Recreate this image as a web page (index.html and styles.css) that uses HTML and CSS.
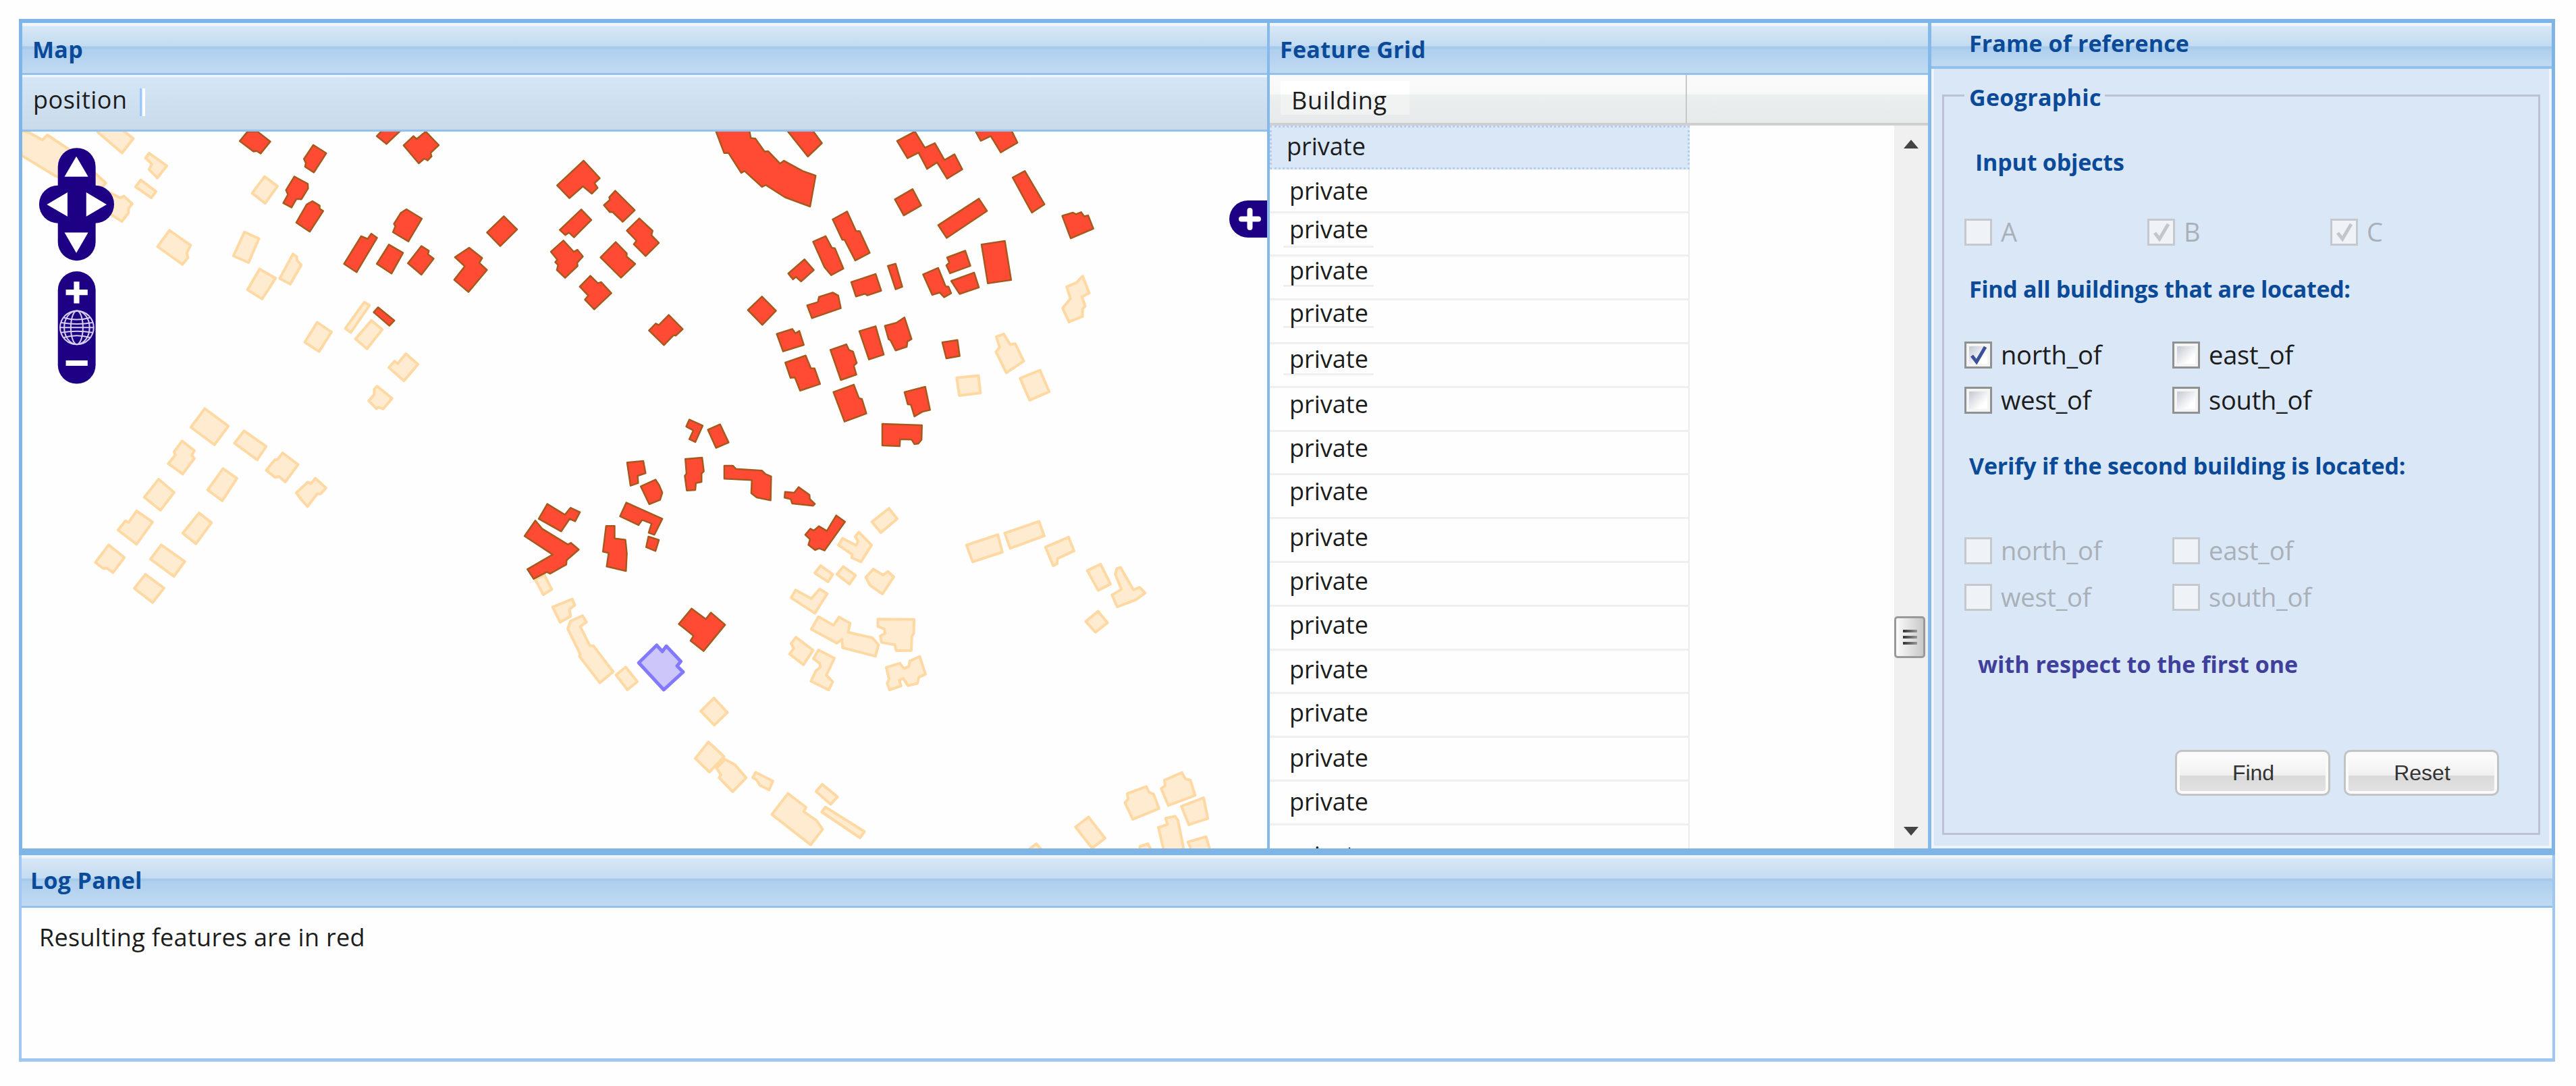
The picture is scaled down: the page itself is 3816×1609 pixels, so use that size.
FILE: index.html
```html
<!DOCTYPE html>
<html>
  <head>
    <meta charset="utf-8">
    <title>Map</title>
    <link rel="stylesheet" href="styles.css">
  </head>
  <body>
    <div class="viewport">
      <div class="top">
        <div class="panel map-panel">
          <h2 class="title">Map</h2>
          <div class="toolbar">
            <span>position</span>
            <i class="separator"></i>
          </div>
          <svg class="map" viewBox="33 195 1844 1062">
            <!-- every tile keeps its own coordinates -->
            <g class="private" transform="scale(.4082)">
              <polygon points="60,470 105,481 154,508 172,490 250,542 384,664 374,676 330,690 200,638 80,565"/>
              <polygon points="355,480 380,460 430,460 484,503 443,555"/>
              <polygon points="541,556 605,602 571,646 541,615 551,595 528,574"/>
              <polygon points="511,653 566,695 549,718 492,678"/>
              <polygon points="400,700 436,718 450,712 480,740 467,756 466,773 442,804 390,770"/>
              <polygon points="960,641 1007,676 962,738 915,701"/>
              <polygon points="615,836 692,890 678,917 682,935 662,960 572,895"/>
              <polygon points="887,842 940,866 902,953 847,929"/>
              <polygon points="1063,922 1077,932 1078,945 1093,962 1054,1031 1015,1011"/>
              <polygon points="942,976 1000,1010 987,1030 980,1042 951,1085 898,1052"/>
              <polygon points="1322,1097 1341,1108 1273,1207 1253,1192"/>
              <polygon points="1348,1163 1387,1196 1332,1266 1290,1230"/>
              <polygon points="1151,1170 1203,1205 1158,1276 1106,1242"/>
              <polygon points="1473,1284 1517,1322 1466,1382 1411,1334 1432,1311 1443,1320"/>
              <polygon points="1369,1402 1423,1446 1391,1484 1375,1478 1366,1483 1338,1455 1358,1432 1358,1412"/>
            </g>
            <g class="result" transform="scale(.4082)">
              <polygon points="870,512 898,478 935,478 981,514 946,557 932,548 920,550"/>
              <polygon points="1137,526 1184,556 1139,626 1107,605 1110,592 1103,577"/>
              <polygon points="1068,641 1117,667 1118,684 1094,723 1076,722 1058,753 1028,737 1045,706 1038,690"/>
              <polygon points="1134,730 1160,746 1160,758 1173,766 1124,841 1075,808 1113,742"/>
            </g>
            <g class="result" transform="translate(500 170) scale(.3571 .3333)">
              <polygon points="163,95 185,70 262,70 203,130"/>
              <polygon points="366,75 420,135 386,170 390,185 374,203 360,195 337,216 274,136 315,95 328,108"/>
              <polygon points="286,420 350,462 294,563 230,522 240,495 234,485 262,437"/>
              <polygon points="98,540 125,552 140,529 164,547 79,700 27,663"/>
              <polygon points="213,577 272,614 224,706 163,663"/>
              <polygon points="348,584 379,605 375,620 399,640 348,711 292,660"/>
              <polygon points="690,451 745,510 675,584 620,523"/>
              <polygon points="546,591 600,637 588,658 620,690 543,788 484,734 528,674 487,633"/>
              <polygon points="1021,204 1088,282 1066,304 1079,325 1055,351 1018,318 962,371 911,314"/>
              <polygon points="1152,338 1233,424 1183,476 1141,432 1130,433 1105,402 1130,378 1127,367"/>
              <polygon points="1011,421 1053,468 981,545 960,524 945,535 922,512"/>
              <polygon points="1252,461 1307,516 1302,535 1333,570 1278,628 1229,576 1240,560 1200,515"/>
              <polygon points="937,559 980,609 995,600 1018,630 994,658 996,672 944,725 910,690 915,668 903,655 912,645 885,609"/>
              <polygon points="1154,566 1200,616 1199,630 1235,663 1176,724 1091,634"/>
              <polygon points="1049,716 1080,749 1094,744 1136,793 1065,865 1026,822 1040,804 1005,764"/>
              <polygon points="168,856 236,915 215,938 150,878"/>
              <polygon points="1374,890 1432,953 1403,982 1394,980 1354,1024 1292,959 1320,928 1333,935"/>
            </g>
            <g class="result" transform="translate(1030 170) scale(.5485 .3444)">
              <polygon points="55,68 146,68 150,100 162,102 187,158 197,157 229,210 239,198 290,242 325,262 310,395 242,355 190,302 180,310 133,242 124,250 90,165 78,165"/>
              <polygon points="248,68 317,68 342,122 304,180"/>
              <polygon points="593,72 620,142 647,122 673,195 700,170 721,235 680,275 653,205 626,233 603,163 573,187 545,113"/>
              <polygon points="756,68 854,68 870,120 825,162 798,92 771,112"/>
              <polygon points="890,242 943,385 909,421 857,270"/>
              <polygon points="587,320 610,390 563,433 539,364"/>
              <polygon points="766,361 788,414 679,530 656,475"/>
              <polygon points="991,435 1020,421 1028,428 1042,419 1050,437 1061,433 1075,490 1014,532"/>
              <polygon points="410,416 434,500 444,501 471,594 432,627 403,538 397,538 371,450"/>
              <polygon points="352,522 369,573 377,574 400,662 367,690 349,656 318,546"/>
              <polygon points="295,622 320,668 286,717 272,698 264,708 251,683"/>
              <polygon points="487,685 502,757 465,777 458,770 434,782 421,720"/>
              <polygon points="541,641 559,740 541,751 520,650"/>
              <polygon points="371,765 386,778 393,832 315,875 302,820 331,806 334,784"/>
              <polygon points="729,585 743,650 688,682 678,648 686,636 680,614"/>
              <polygon points="656,659 676,738 684,740 691,768 672,785 660,765 640,775 615,687"/>
              <polygon points="753,679 766,743 714,771 691,715"/>
              <polygon points="836,543 853,711 790,725 773,558"/>
              <polygon points="180,782 218,843 181,904 142,840"/>
              <polygon points="262,922 270,940 281,930 293,990 237,1018 220,943"/>
              <polygon points="298,1036 312,1090 322,1091 337,1158 283,1187 269,1130 257,1132 243,1066"/>
              <polygon points="408,988 415,1012 426,1019 436,1068 428,1080 435,1118 393,1141 365,1012"/>
              <polygon points="487,910 509,1032 469,1053 443,931"/>
              <polygon points="565,872 584,965 573,975 571,998 541,1014 527,970 522,966 512,908 543,895"/>
              <polygon points="708,969 714,1038 678,1048 667,979"/>
              <polygon points="428,1161 442,1219 450,1223 462,1285 403,1320 373,1193"/>
              <polygon points="621,1170 634,1270 613,1278 592,1298 582,1247 574,1246 565,1193"/>
              <polygon points="505,1330 612,1336 611,1398 602,1415 592,1417 584,1397 553,1396 552,1426 505,1423"/>
              <polygon points="67,1332 90,1410 56,1433 34,1355"/>
            </g>
            <g class="private" transform="translate(1030 170) scale(.5485 .3444)">
              <polygon points="1046,694 1064,767 1044,783 1053,823 1046,835 1046,868 1009,891 992,832 1013,791 1003,740 1030,722"/>
              <polygon points="833,943 850,988 864,985 887,1060 840,1110 812,1020 822,1000 813,955"/>
              <polygon points="765,1122 770,1197 713,1208 706,1132"/>
              <polygon points="931,1099 956,1192 903,1228 877,1134"/>
            </g>
            <g class="private" transform="translate(740 590) scale(.4209 .3333)">
              <polygon points="125,805 158,785 184,850 154,873"/>
              <polygon points="256,893 265,920 246,938 250,970 213,996 187,928"/>
              <polygon points="292,967 306,995 284,1015 318,1100 330,1100 400,1216 353,1265 281,1147 284,1138 240,1025 250,990"/>
              <polygon points="444,1195 485,1260 450,1296 410,1230"/>
              <polygon points="755,1333 802,1397 756,1453 708,1391"/>
            </g>
            <g class="result" transform="translate(740 590) scale(.4209 .3333)">
              <polygon points="668,95 715,122 689,195 668,182 682,143 657,126"/>
              <polygon points="654,270 713,264 719,325 711,335 711,372 691,377 689,408 659,410 652,345 658,335"/>
              <polygon points="449,286 506,279 514,333 486,345 488,377 461,389"/>
              <polygon points="549,362 562,387 573,420 565,452 527,471 497,392"/>
              <polygon points="791,300 821,300 832,314 924,322 936,337 956,348 954,454 905,441 886,422 888,364 791,358"/>
              <polygon points="1053,395 1091,430 1092,448 1110,470 1103,478 1030,468 1025,449 1003,442 1005,416 1037,420"/>
              <polygon points="446,464 573,536 545,607 525,598 535,557 502,541 489,564 424,525"/>
              <polygon points="524,615 561,630 549,679 516,662"/>
              <polygon points="168,470 230,518 250,487 283,507 266,547 247,536 217,592 138,536"/>
              <polygon points="126,544 150,580 240,650 251,643 279,673 236,720 235,739 178,780 167,772 120,803 98,760 187,695 88,613"/>
              <polygon points="375,568 405,568 405,623 443,629 448,690 445,768 377,748 384,688 364,682"/>
              <polygon points="1185,521 1216,549 1144,677 1125,667 1111,675 1087,652 1093,627 1076,607 1094,580 1106,588 1124,569 1152,590"/>
              <polygon points="676,935 726,982 744,953 794,1007 718,1124 672,1078 683,1056 631,1004"/>
            </g>
            <g class="selected" transform="translate(740 590) scale(.4209 .3333)">
              <polygon points="553,1098 573,1126 587,1102 638,1170 625,1190 646,1217 578,1296 490,1176"/>
            </g>
            <g class="private" transform="translate(1100 700) scale(.4464 .3699)">
              <polygon points="486,144 513,186 459,241 429,198"/>
              <polygon points="386,239 428,291 393,358 362,341 364,329 318,291 332,264 377,292 383,276 374,257"/>
              <polygon points="259,373 299,408 284,438 240,403"/>
              <polygon points="334,377 375,412 355,447 313,408"/>
              <polygon points="434,387 466,411 482,397 502,418 464,487 423,452 409,420"/>
              <polygon points="176,471 228,505 256,467 281,486 240,564 161,502"/>
              <polygon points="252,578 302,612 320,579 357,604 350,640 430,662 451,690 441,736 332,702 330,668 313,684 228,628"/>
              <polygon points="449,587 569,589 568,645 562,655 560,713 510,714 505,690 461,681 457,655 473,645 470,627 449,617"/>
              <polygon points="177,660 234,712 202,770 156,727 170,705 161,685"/>
              <polygon points="252,711 305,744 278,812 299,838 286,871 227,836 243,795 258,780 256,765 235,746"/>
              <polygon points="588,737 607,808 585,820 580,845 549,854 533,825 520,832 526,855 488,871 480,845 486,827 477,781 522,764 535,785 552,777 555,755"/>
              <polygon points="847,249 862,319 764,358 743,291"/>
              <polygon points="984,196 1001,254 888,304 870,243"/>
              <polygon points="1082,259 1100,314 1045,345 1044,365 1031,374 1005,299"/>
              <polygon points="1188,367 1221,447 1180,472 1144,393"/>
              <polygon points="1254,380 1297,470 1318,460 1336,483 1305,510 1243,538 1226,491 1257,468 1237,408 1242,385"/>
              <polygon points="1180,556 1211,602 1171,640 1139,597"/>
              <polygon points="1458,1202 1470,1228 1486,1232 1502,1293 1413,1334 1389,1266 1402,1255 1400,1232"/>
              <polygon points="1340,1258 1349,1281 1364,1288 1382,1346 1295,1389 1269,1323 1279,1308 1277,1286"/>
              <polygon points="1530,1303 1544,1386 1481,1411 1456,1337"/>
              <polygon points="1148,1380 1203,1465 1160,1505 1105,1420"/>
              <polygon points="1435,1377 1445,1393 1465,1515 1398,1515 1380,1422 1410,1410 1404,1385"/>
              <polygon points="1538,1459 1552,1515 1490,1515 1478,1480"/>
              <polygon points="975,1487 995,1515 950,1510"/>
              <polygon points="1345,1487 1358,1515 1315,1515 1320,1497"/>
            </g>
            <g class="private" transform="translate(1000 1030) scale(.3333)">
              <polygon points="148,208 218,273 153,342 90,281"/>
              <polygon points="222,285 265,308 316,367 256,429 196,367 204,354 184,324"/>
              <polygon points="358,343 435,382 418,421 376,400 364,378 345,366"/>
              <polygon points="502,437 582,498 572,518 628,556 656,596 603,665 430,530"/>
              <polygon points="654,396 722,452 692,485 627,428"/>
              <polygon points="668,497 842,606 822,634 652,519"/>
            </g>
            <g class="private" transform="translate(120 580) scale(.3333)">
              <polygon points="550,76 655,154 593,237 488,159"/>
              <polygon points="725,175 823,244 783,304 682,230"/>
              <polygon points="896,273 965,325 908,402 880,378 863,382 823,350 862,303 874,302"/>
              <polygon points="1042,386 1089,429 1065,455 1050,455 1007,511 978,480 957,450 1008,403 1022,410"/>
              <polygon points="449,220 504,263 492,284 504,297 452,367 388,321 419,282 414,268"/>
              <polygon points="631,343 693,386 628,486 563,438"/>
              <polygon points="345,390 414,449 353,528 281,470"/>
              <polygon points="247,531 318,580 247,679 165,616 197,575 212,582"/>
              <polygon points="525,540 580,583 511,677 452,630"/>
              <polygon points="123,682 193,738 142,805 115,785 98,787 64,760"/>
              <polygon points="357,682 461,756 413,822 309,745"/>
              <polygon points="286,813 369,874 318,938 237,875"/>
            </g>

            <g class="controls" transform="scale(.4082)">
              <rect x="210" y="537" width="137" height="409" rx="68"/>
              <rect x="142" y="673" width="272" height="137" rx="68"/>
              <polygon points="277,568 320,641 234,641"/>
              <polygon points="234,844 320,844 277,918"/>
              <polygon points="170,742 245,698 245,786"/>
              <polygon points="387,742 313,698 313,786"/>
              <rect x="210" y="985" width="137" height="408" rx="68"/>
              <path class="sign" d="M249 1061h59M278 1032v59M249 1318h59"/>
              <g class="globe">
                <circle cx="279" cy="1189" r="61"/>
                <ellipse cx="279" cy="1189" rx="22" ry="61"/>
                <ellipse cx="279" cy="1189" rx="46" ry="61"/>
                <path d="M218 1189h122M232 1153q47 14 94 0M232 1225q47 -14 94 0M222 1171q57 10 114 0M222 1207q57 -10 114 0"/>
              </g>
            </g>
            <g class="controls">
              <path d="M1877 297h-28a28 27.500 0 0 0 0 55h28z"/>
              <path class="sign small" d="M1839 324.500h25M1851.500 312v25"/>
            </g>
          </svg>
        </div>

        <div class="panel grid-panel">
          <h2 class="title">Feature Grid</h2>
          <div class="columns"><div class="column"><span>Building</span></div></div>
          <div class="grid-body">
            <div class="rows">
              <div class="row current"><span>private</span></div>
              <div class="row"><span>private</span></div>
              <div class="row"><span>private</span></div>
              <div class="row"><span>private</span></div>
              <div class="row"><span>private</span></div>
              <div class="row"><span>private</span></div>
              <div class="row"><span>private</span></div>
              <div class="row"><span>private</span></div>
              <div class="row"><span>private</span></div>
              <div class="row"><span>private</span></div>
              <div class="row"><span>private</span></div>
              <div class="row"><span>private</span></div>
              <div class="row"><span>private</span></div>
              <div class="row"><span>private</span></div>
              <div class="row"><span>private</span></div>
              <div class="row"><span>private</span></div>
              <div class="row"><span>private</span></div>
            </div>
            <div class="scrollbar">
              <i class="arrow up"></i>
              <div class="thumb"><i></i><i></i><i></i></div>
              <i class="arrow down"></i>
            </div>
          </div>
        </div>

        <div class="panel frame-panel">
          <h2 class="title">Frame of reference</h2>
          <fieldset>
            <legend>Geographic</legend>
            <h3 class="input-objects">Input objects</h3>
            <div class="checks objects disabled">
              <label><i class="box"></i>A</label>
              <label><i class="box"><svg viewBox="0 0 35 34"><path d="M8 18l7 9L28 5"/></svg></i>B</label>
              <label><i class="box"><svg viewBox="0 0 35 34"><path d="M8 18l7 9L28 5"/></svg></i>C</label>
            </div>
            <h3 class="find">Find all buildings that are located:</h3>
            <div class="checks directions">
              <label><i class="box"><svg viewBox="0 0 35 34"><path d="M8 18l7 9L28 5"/></svg></i>north_of</label>
              <label><i class="box"></i>east_of</label>
              <label><i class="box"></i>west_of</label>
              <label><i class="box"></i>south_of</label>
            </div>
            <h3 class="verify">Verify if the second building is located:</h3>
            <div class="checks directions disabled">
              <label><i class="box"></i>north_of</label>
              <label><i class="box"></i>east_of</label>
              <label><i class="box"></i>west_of</label>
              <label><i class="box"></i>south_of</label>
            </div>
            <h3 class="respect">with respect to the first one</h3>
            <div class="buttons">
              <button>Find</button>
              <button>Reset</button>
            </div>
          </fieldset>
        </div>
      </div>

      <div class="log-panel">
        <h2 class="title">Log Panel</h2>
        <p>Resulting features are in red</p>
      </div>
    </div>
  </body>
</html>
```

FILE: styles.css
```css
* {
  box-sizing: border-box;
}
body {
  margin: 0;
  padding: 28px 31px 0 28px;
  background-color: #fefefe;
  font-family: "Open Sans", "Noto Sans", sans-serif;
  font-size: 36px;
  color: #1c1c1c;
}
h2, h3, p {
  margin: 0;
}

.viewport {
  width: 3757px;
  height: 1545px;
}
.top {
  display: flex;
  height: 1239px;
  border: solid #7eb5e6;
  border-width: 6px 5px 10px 5px;
}
.panel {
  display: flex;
  flex-direction: column;
  overflow: hidden;
}
.title {
  flex: none;
  height: 77px;
  padding: 5px 15px 0;
  line-height: 68px;
  font-size: 34px;
  letter-spacing: 0.3px;
  color: #0b4a98;
  border-bottom: 3px solid #93c1ed;
  background: linear-gradient(#eef5fc 0, #eef5fc 4px, #d7e7f5 5px, #c4dbf1 34px, #a6caec 35px, #a6caec 38px, #aecfee 39px, #c0daf2 100%);
}

/* map */
.map-panel {
  width: 1844px;
}
.toolbar {
  flex: none;
  display: flex;
  align-items: center;
  height: 84px;
  padding: 0 16px;
  letter-spacing: 0.5px;
  line-height: 70px;
  border-bottom: 3px solid #93c1ed;
  background: linear-gradient(#eef5fc 0, #eef5fc 3px, #d4e5f5 4px, #c9daeb 100%);
}
.toolbar span {
  margin-top: -7px;
}
.separator {
  width: 8px;
  height: 41px;
  margin-left: 18px;
  border: solid;
  border-width: 0 4px 0 3px;
  border-color: #fff #fff #fff #98c8ff;
}
.map {
  display: block;
  width: 1844px;
  height: 1062px;
  background-color: #fefefe;
}
.map polygon {
  vector-effect: non-scaling-stroke;
  stroke-linejoin: round;
}
.private {
  fill: #ffebd0;
  stroke: #ffd9a3;
  stroke-width: 4px;
}
.result {
  fill: #ff4b33;
  stroke: #a8581c;
  stroke-width: 2.5px;
}
.selected {
  fill: #ccc6fb;
  stroke: #8478ff;
  stroke-width: 5px;
}
.controls {
  fill: #1e0085;
}
.controls polygon {
  fill: #fff;
}
.sign {
  stroke: #fff;
  stroke-width: 20px;
  stroke-linecap: square;
}
.small {
  stroke-width: 8px;
  stroke-linecap: round;
}
.globe {
  fill: none;
  stroke: #d5cfee;
  stroke-width: 5px;
}

/* grid */
.grid-panel {
  width: 979px;
  border-left: 4px solid #84b9e9;
}
.columns {
  flex: none;
  height: 75px;
  border-bottom: 4px solid #cfcfcf;
  background: linear-gradient(#fafafa 0, #f8f8f8 40%, #eceff0 41%, #e6eaea 100%);
}
.column {
  width: 618px;
  height: 71px;
  padding: 9px 16px;
  border-right: 2px solid #c8c8c8;
}
.column span {
  display: block;
  width: 191px;
  height: 50px;
  padding-left: 16px;
  line-height: 57px;
  letter-spacing: 0.7px;
  background: linear-gradient(#fff 0, #fff 40%, #f1f2f2 41%, #f1f2f2 100%);
}
.grid-body {
  flex: 1;
  display: flex;
  justify-content: space-between;
  overflow: hidden;
}
.rows {
  width: 622px;
}
.row {
  height: 64.8px;
  padding: 0 20px;
  line-height: 48px;
  border-right: 2px solid #ececec;
  border-bottom: 3px solid #efefef;
}
.row span {
  display: inline-block;
  width: 134px;
  padding-left: 9px;
}
.row.current {
  padding: 4px 0 0 13px;
  background-color: #dae7f6;
  border: 3px dotted #b3ccf0;
}
.row:nth-child(2) {
  padding-top: 8px;
}
.row:nth-child(n+3):nth-child(-n+6) span {
  border-bottom: 3px solid #efefef;
}
.row:nth-child(4) {
  line-height: 42px;
}
.row:nth-child(5) {
  line-height: 38px;
}
.row:nth-child(6) {
  line-height: 43px;
}
.row:nth-child(n+10) {
  padding-top: 3px;
}
.row:nth-child(n+13) {
  padding-top: 4px;
}
.row:nth-child(15),
.row:nth-child(16) {
  padding-top: 6px;
}
.row:nth-child(17) {
  padding-top: 20px;
}
.scrollbar {
  display: flex;
  flex-direction: column;
  align-items: center;
  width: 50px;
  padding: 21px 0 19px;
  background-color: #f0f0f0;
}
.arrow {
  border: solid transparent;
  border-width: 0 11px;
}
.up {
  border-bottom: 13px solid #444;
}
.down {
  margin-top: auto;
  border-top: 13px solid #444;
}
.thumb {
  display: flex;
  flex-direction: column;
  align-items: center;
  justify-content: center;
  gap: 5px;
  width: 46px;
  height: 62px;
  margin: 693px 4px 0 0;
  border: 3px solid #999;
  border-radius: 5px;
  background: linear-gradient(to right, #fafafa, #e2e2e2 50%, #c8c8c8);
}
.thumb i {
  width: 21px;
  height: 4px;
  background: linear-gradient(to right, #333, #999);
}

/* frame of reference */
.frame-panel {
  width: 924px;
  border-left: 5px solid #84b9e9;
  background-color: #dae7f6;
  box-shadow: inset 4px 0 #eef4fc, inset -4px -4px #eef4fc;
}
.frame-panel .title {
  height: 68px;
  padding: 0 56px;
  line-height: 60px;
  letter-spacing: 0.1px;
  border-bottom-width: 4px;
}
fieldset {
  width: 886px;
  height: 1119px;
  margin: 16px 0 0 16px;
  padding: 0 0 0 30px;
  border: 3px solid #bbc1d6;
}
legend {
  padding: 6px 5px 0 7px;
  letter-spacing: 0.3px;
}
legend, h3 {
  font-size: 34px;
  font-weight: bold;
  line-height: 40px;
  color: #0b4a98;
}
h3 {
  margin-left: 7px;
}
h3.input-objects {
  margin: 56px 0 64px 16px;
  letter-spacing: -0.2px;
}
h3.find {
  margin-top: 44px;
  margin-bottom: 58px;
  letter-spacing: -0.35px;
}
h3.verify {
  margin-top: 57px;
  margin-bottom: 86px;
  letter-spacing: -0.2px;
}
h3.respect {
  margin: 59px 0 107px 20px;
  color: #40409c;
}
.checks {
  display: grid;
  row-gap: 27px;
  font-size: 38px;
}
.objects {
  grid-template-columns: 271px 271px 271px;
}
.directions {
  grid-template-columns: 308px 308px;
}
.directions.disabled {
  row-gap: 29px;
}
label {
  display: flex;
  gap: 13px;
  height: 40px;
  line-height: 38px;
  letter-spacing: -0.2px;
}
.box {
  width: 41px;
  height: 40px;
  border: 3px solid #8f9090;
  background: linear-gradient(135deg, #c3c9d2, #fff 75%) content-box, #f4f4f4;
  padding: 4px;
}
.box svg {
  display: block;
  width: 35px;
  height: 34px;
  margin: -4px;
  fill: none;
  stroke: #3b4f9b;
  stroke-width: 5px;
}
.disabled {
  color: #a9b0b8;
}
.disabled .box {
  border-color: #c5c9cd;
  background: #eff2f7;
}
.disabled svg {
  stroke: #c2c6cd;
}
.buttons {
  display: flex;
  gap: 20px;
  margin-left: 312px;
}
button {
  width: 230px;
  height: 68px;
  padding: 0 0 0 2px;
  font: 32px "Liberation Sans", Arial, sans-serif;
  color: #333;
  border: 3px solid #c2c3c5;
  border-radius: 10px;
  background: linear-gradient(#fdfdfd 0, #f0f0f0 56%, #dadada 57%, #e2e2e2 100%);
  box-shadow: inset 0 0 0 4px #fafafa;
}

/* log */
.log-panel {
  height: 306px;
  border: solid #9fc7f1;
  border-width: 0 4px 5px;
}
.log-panel .title {
  height: 78px;
  padding: 1px 13px;
  line-height: 72px;
}
.log-panel p {
  padding: 19px 26px;
  line-height: 50px;
  letter-spacing: 0.3px;
}
```
